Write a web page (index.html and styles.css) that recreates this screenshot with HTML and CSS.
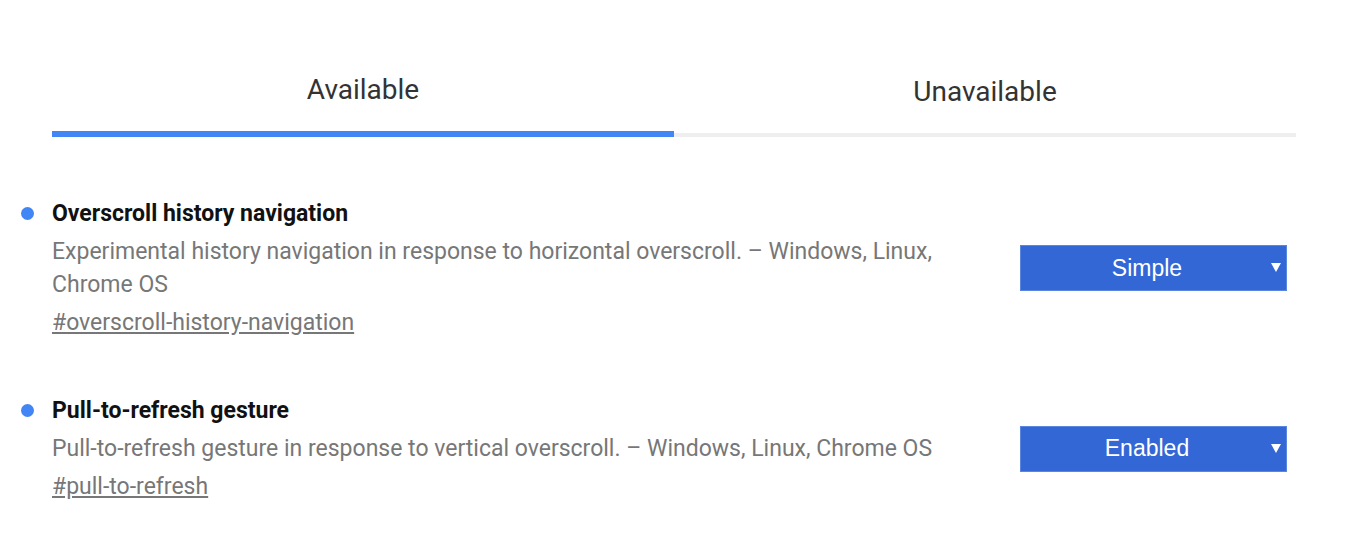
FILE: index.html
```html
<!DOCTYPE html>
<html>
<head>
<meta charset="utf-8">
<link rel="stylesheet" href="styles.css">
</head>
<body>
<div class="page">
  <div class="tabs">
    <div class="tab active">Available</div>
    <div class="tab">Unavailable</div>
  </div>
  <div class="experiments">
    <div class="experiment">
      <span class="bullet"></span>
      <div class="text">
        <div class="name">Overscroll history navigation</div>
        <div class="desc">Experimental history navigation in response to horizontal overscroll. – Windows, Linux, Chrome OS</div>
        <a class="permalink" href="#overscroll-history-navigation">#overscroll-history-navigation</a>
      </div>
      <div class="select"><span class="value">Simple</span><span class="arrow"></span></div>
    </div>
    <div class="experiment">
      <span class="bullet"></span>
      <div class="text">
        <div class="name">Pull-to-refresh gesture</div>
        <div class="desc">Pull-to-refresh gesture in response to vertical overscroll. – Windows, Linux, Chrome OS</div>
        <a class="permalink" href="#pull-to-refresh">#pull-to-refresh</a>
      </div>
      <div class="select"><span class="value">Enabled</span><span class="arrow"></span></div>
    </div>
  </div>
</div>
</body>
</html>
```
FILE: styles.css
```css
html, body {
  margin: 0;
  padding: 0;
  background: #fff;
}
body {
  font-family: Roboto, "Liberation Sans", sans-serif;
  width: 1346px;
  height: 542px;
  overflow: hidden;
}
.page {
  padding: 74px 50px 0 52px;
}
.tabs {
  display: flex;
  align-items: flex-end;
}
.tab {
  flex: 1;
  text-align: center;
  font-size: 28px;
  line-height: 32px;
  color: #333;
  padding-bottom: 25px;
  border-bottom: 4px solid #eeeeee;
}
.tab.active {
  border-bottom: 6px solid #4285f4;
}
.experiments {
  margin-left: -31px;
  padding-top: 60px;
}
.experiment {
  display: flex;
  align-items: center;
  margin-bottom: 55px;
}
.bullet {
  align-self: flex-start;
  flex: none;
  width: 13px;
  height: 13px;
  border-radius: 50%;
  background: #4285f4;
  margin-top: 10px;
  margin-right: 18px;
}
.text {
  width: 920px;
  flex: none;
}
.name {
  font-size: 23px;
  font-weight: 700;
  line-height: 33px;
  color: #111;
  margin-bottom: 5px;
}
.desc {
  font-size: 23px;
  line-height: 33px;
  color: #777;
}
.permalink {
  display: inline-block;
  margin-top: 5px;
  font-size: 23px;
  line-height: 33px;
  color: #777;
  text-decoration: underline;
}
.select {
  margin-left: auto;
  margin-right: 9px;
  width: 267px;
  height: 46px;
  box-sizing: border-box;
  background: #3367d6;
  border: 1px solid #5a86e0;
  color: #fff;
  font-family: "Liberation Sans", Arial, sans-serif;
  font-size: 23px;
  display: flex;
  align-items: center;
  position: relative;
}
.value {
  flex: 1;
  text-align: center;
  padding-right: 13px;
}
.arrow {
  position: absolute;
  right: 5px;
  top: 17px;
  width: 0;
  height: 0;
  border-left: 5px solid transparent;
  border-right: 5px solid transparent;
  border-top: 9px solid #fff;
}
```
